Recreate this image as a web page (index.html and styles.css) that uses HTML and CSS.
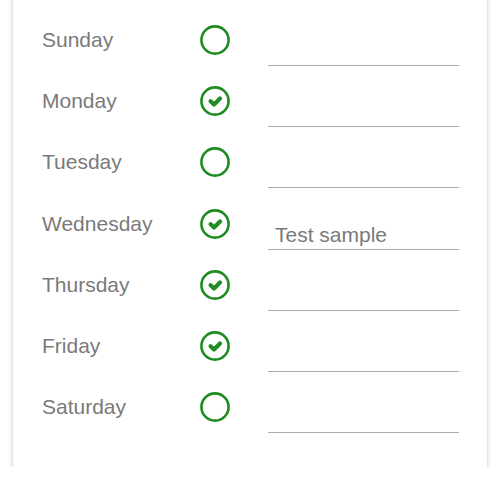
FILE: index.html
```html
<!DOCTYPE html>
<html>
<head>
<meta charset="utf-8">
<link rel="stylesheet" href="styles.css">
</head>
<body>
<div class="card">
  <div class="row"><span class="day">Sunday</span><svg class="icon" viewBox="0 0 30 30"><circle cx="15" cy="15" r="13.6"/></svg><div class="field"></div></div>
  <div class="row"><span class="day">Monday</span><svg class="icon" viewBox="0 0 30 30"><circle cx="15" cy="15" r="13.6"/><path class="check" d="M10.6 15.3 L14 18.5 L20 12.5"/></svg><div class="field"></div></div>
  <div class="row"><span class="day">Tuesday</span><svg class="icon" viewBox="0 0 30 30"><circle cx="15" cy="15" r="13.6"/></svg><div class="field"></div></div>
  <div class="row"><span class="day">Wednesday</span><svg class="icon" viewBox="0 0 30 30"><circle cx="15" cy="15" r="13.6"/><path class="check" d="M10.6 15.3 L14 18.5 L20 12.5"/></svg><div class="field">Test sample</div></div>
  <div class="row"><span class="day">Thursday</span><svg class="icon" viewBox="0 0 30 30"><circle cx="15" cy="15" r="13.6"/><path class="check" d="M10.6 15.3 L14 18.5 L20 12.5"/></svg><div class="field"></div></div>
  <div class="row"><span class="day">Friday</span><svg class="icon" viewBox="0 0 30 30"><circle cx="15" cy="15" r="13.6"/><path class="check" d="M10.6 15.3 L14 18.5 L20 12.5"/></svg><div class="field"></div></div>
  <div class="row"><span class="day">Saturday</span><svg class="icon" viewBox="0 0 30 30"><circle cx="15" cy="15" r="13.6"/></svg><div class="field"></div></div>
</div>
</body>
</html>
```
FILE: styles.css
```css
html, body {
  margin: 0;
  padding: 0;
  background: #ffffff;
}
.card {
  margin: -20.6px 0 0 13px;
  width: 474px;
  box-sizing: border-box;
  padding: 30px 28px 29.4px 29px;
  background: #ffffff;
  box-shadow: 0 2px 5px rgba(0, 0, 0, 0.24);
  font-family: "Liberation Sans", Arial, sans-serif;
}
.row {
  height: 61.2px;
  display: grid;
  grid-template-columns: 120px 30px 191px;
  column-gap: 38px;
  align-items: center;
}
.day {
  font-size: 21px;
  color: #7a7a7a;
  white-space: nowrap;
}
.icon {
  width: 30px;
  height: 30px;
  display: block;
}
.icon circle {
  fill: none;
  stroke: #1f8c22;
  stroke-width: 2.6;
}
.icon .check {
  fill: none;
  stroke: #1f8c22;
  stroke-width: 4.2;
  stroke-linecap: round;
  stroke-linejoin: round;
}
.field {
  align-self: end;
  margin-bottom: 4.6px;
  height: 30px;
  box-sizing: border-box;
  border-bottom: 1.5px solid #ababab;
  padding-left: 7px;
  font-size: 21px;
  line-height: 30px;
  color: #7a7a7a;
  white-space: nowrap;
}
```
